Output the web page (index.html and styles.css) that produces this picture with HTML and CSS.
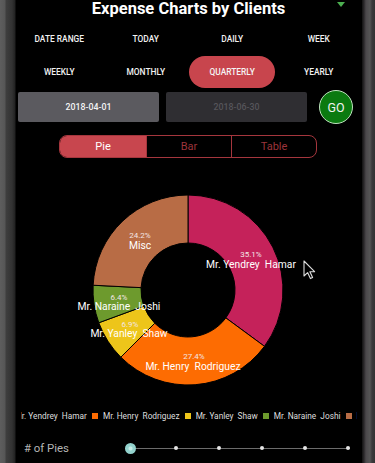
FILE: index.html
```html
<!DOCTYPE html>
<html>
<head>
<meta charset="utf-8">
<link rel="stylesheet" href="styles.css">
</head>
<body>
<div class="device">
  <div class="bezel-left"></div>
  <div class="screen">
    <div class="title-row">
      <h1 class="title">Expense Charts by Clients</h1>
      <span class="menu-caret"></span>
    </div>
    <div class="tabs">
      <div class="tab">DATE RANGE</div>
      <div class="tab">TODAY</div>
      <div class="tab">DAILY</div>
      <div class="tab">WEEK</div>
      <div class="tab">WEEKLY</div>
      <div class="tab">MONTHLY</div>
      <div class="tab"><span class="pill">QUARTERLY</span></div>
      <div class="tab">YEARLY</div>
    </div>
    <div class="date-row">
      <div class="date-input active">2018-04-01</div>
      <div class="date-input disabled">2018-06-30</div>
      <div class="go-btn">GO</div>
    </div>
    <div class="segment">
      <div class="seg seg-on">Pie</div>
      <div class="seg">Bar</div>
      <div class="seg seg-last">Table</div>
    </div>
    <div class="chart">
      <svg class="donut" width="346" height="240" viewBox="0 0 346 240">
        <g stroke="#000" stroke-width="1">
          <path fill="#c5225a" d="M172,35 A95,95 0 0 1 248.48,186.34 L209.84,157.88 A47,47 0 0 0 172,83 Z"/>
          <path fill="#fd6c02" d="M248.48,186.34 A95,95 0 0 1 104.82,197.18 L138.77,163.23 A47,47 0 0 0 209.84,157.88 Z"/>
          <path fill="#edc51a" d="M104.82,197.18 A95,95 0 0 1 82.81,162.75 L127.88,146.20 A47,47 0 0 0 138.77,163.23 Z"/>
          <path fill="#6d9a2d" d="M82.81,162.75 A95,95 0 0 1 77.12,125.23 L125.06,127.64 A47,47 0 0 0 127.88,146.20 Z"/>
          <path fill="#b86c45" d="M77.12,125.23 A95,95 0 0 1 172,35 L172,83 A47,47 0 0 0 125.06,127.64 Z"/>
        </g>
        <g class="lbl" text-anchor="middle">
          <text class="pct" x="235" y="97">35.1%</text>
          <text class="name" x="235" y="108">Mr. Yendrey  Hamar</text>
          <text class="pct" x="124" y="78">24.2%</text>
          <text class="name" x="124" y="89">Misc</text>
          <text class="pct" x="103" y="140">6.4%</text>
          <text class="name" x="103" y="150">Mr. Naraine  Joshi</text>
          <text class="pct" x="114" y="167">6.9%</text>
          <text class="name" x="113" y="177">Mr. Yanley  Shaw</text>
          <text class="pct" x="178" y="199">27.4%</text>
          <text class="name" x="177" y="210">Mr. Henry  Rodriguez</text>
        </g>
      </svg>
      <svg class="cursor" width="14" height="20" viewBox="0 0 14 20">
        <path d="M1,1 L1,16 L4.6,12.6 L7.4,18.6 L9.6,17.6 L6.9,11.7 L11.6,11.7 Z" fill="#000" stroke="#ddd" stroke-width="1.1" stroke-linejoin="round"/>
      </svg>
    </div>
    <div class="legend">
      <div class="legend-inner">
        <span class="li"><i class="sw" style="background:#c5225a"></i>Mr. Yendrey  Hamar</span>
        <span class="li"><i class="sw" style="background:#fd6c02"></i>Mr. Henry  Rodriguez</span>
        <span class="li"><i class="sw" style="background:#edc51a"></i>Mr. Yanley  Shaw</span>
        <span class="li"><i class="sw" style="background:#6d9a2d"></i>Mr. Naraine  Joshi</span>
        <span class="li"><i class="sw" style="background:#b86c45"></i>Misc</span>
      </div>
    </div>
    <div class="slider-row">
      <div class="slider-label"># of Pies</div>
      <div class="track">
        <span class="thumb"></span>
        <span class="dot"></span>
        <span class="dot"></span>
        <span class="dot"></span>
        <span class="dot"></span>
        <span class="dot"></span>
      </div>
    </div>
  </div>
  <div class="bezel-right"></div>
</div>
</body>
</html>
```
FILE: styles.css
```css
* { box-sizing: border-box; }
html, body {
  margin: 0;
  padding: 0;
  background: #000;
  width: 375px;
  height: 463px;
  overflow: hidden;
  font-family: Roboto, "Liberation Sans", sans-serif;
}
.device {
  display: flex;
  width: 375px;
  height: 463px;
}
.bezel-left {
  width: 16px;
  flex: none;
  background: linear-gradient(to right, #5e5e5e 0, #565656 5px, #3e3e3e 6px, #333 12px, #222 15px, #000 16px);
}
.bezel-right {
  width: 13px;
  flex: none;
  background: linear-gradient(to right, #111 0, #2b292b 2px, #4b484b 4px, #555 8px, #3c3a3c 10px, #333 13px);
}
.screen {
  width: 346px;
  flex: none;
  background: #000;
  display: flex;
  flex-direction: column;
  overflow: hidden;
}
.title-row {
  position: relative;
  height: 22px;
  display: flex;
  justify-content: center;
}
.title {
  margin: 0;
  font-size: 16.5px;
  font-weight: 700;
  color: #fff;
  line-height: 18px;
  margin-left: -1px;
}
.menu-caret {
  position: absolute;
  right: 17px;
  top: 2px;
  width: 0;
  height: 0;
  border-left: 4px solid transparent;
  border-right: 4px solid transparent;
  border-top: 5px solid #4caf50;
}
.tabs {
  display: grid;
  grid-template-columns: repeat(4, 1fr);
  grid-auto-rows: 33px;
}
.tab {
  display: flex;
  align-items: center;
  justify-content: center;
  color: #f2f2f2;
  font-size: 8.4px;
  font-weight: 500;
}
.pill {
  display: flex;
  align-items: center;
  justify-content: center;
  width: 86px;
  height: 32px;
  border-radius: 16px;
  background: #c8454d;
  color: #f4f4f4;
}
.date-row {
  margin-top: 2px;
  height: 34px;
  display: flex;
  align-items: center;
  padding-left: 2px;
}
.date-input {
  width: 141px;
  height: 30px;
  border-radius: 2px;
  display: flex;
  align-items: center;
  justify-content: center;
  font-size: 8.8px;
  font-weight: 500;
}
.date-input.active {
  background: #5b5a5f;
  color: #f4f4f4;
}
.date-input.disabled {
  background: #2f2e32;
  color: #56555a;
  margin-left: 7px;
}
.go-btn {
  margin-left: 12px;
  width: 34px;
  height: 34px;
  border-radius: 50%;
  background: #0b7a10;
  border: 1px solid #bfe3bf;
  color: #f2f2f2;
  font-size: 12.5px;
  display: flex;
  align-items: center;
  justify-content: center;
}
.segment {
  margin-top: 11px;
  margin-left: 43px;
  width: 258px;
  height: 23px;
  display: flex;
  border: 1.5px solid #a5363d;
  border-radius: 8px;
  overflow: hidden;
}
.seg {
  flex: 1;
  display: flex;
  align-items: center;
  justify-content: center;
  color: #9c343b;
  font-size: 11px;
  border-left: 1.5px solid #a5363d;
}
.seg-on {
  flex: none;
  width: 86px;
  border-left: none;
  background: #c8464e;
  color: #fff;
}
.chart {
  position: relative;
  margin-top: 2px;
  height: 240px;
}
.donut {
  display: block;
}
.lbl text {
  font-family: Roboto, "Liberation Sans", sans-serif;
}
.pct {
  font-size: 8px;
  fill: #f3e6e6;
}
.name {
  font-size: 10.3px;
  fill: #fff;
  white-space: pre;
}
.cursor {
  position: absolute;
  left: 287px;
  top: 100px;
}
.legend {
  margin-top: 10px;
  height: 12px;
  margin-left: 5px;
  margin-right: 5px;
  display: flex;
  justify-content: center;
  overflow: hidden;
}
.legend-inner {
  display: flex;
  flex: none;
  align-items: center;
  white-space: pre;
  font-size: 8.3px;
  color: #dedede;
  gap: 5px;
}
.li {
  display: flex;
  align-items: center;
}
.sw {
  display: inline-block;
  width: 6px;
  height: 6px;
  margin-right: 5px;
}
.slider-row {
  margin-top: 18px;
  height: 16px;
  display: flex;
  align-items: center;
}
.slider-label {
  width: 108.5px;
  padding-left: 8px;
  color: #b5b5b5;
  font-size: 11.4px;
}
.track {
  width: 225.5px;
  height: 12px;
  display: flex;
  align-items: center;
  justify-content: space-between;
  background: linear-gradient(to bottom, transparent 5.5px, #6c6c6c 5.5px, #6c6c6c 6.5px, transparent 6.5px);
}
.thumb {
  width: 11px;
  height: 11px;
  border-radius: 50%;
  background: radial-gradient(circle, #c6ece8 0, #c6ece8 1.5px, #93d2cd 2.5px);
}
.dot {
  width: 4px;
  height: 4px;
  border-radius: 50%;
  background: #e6e6e6;
}
```
